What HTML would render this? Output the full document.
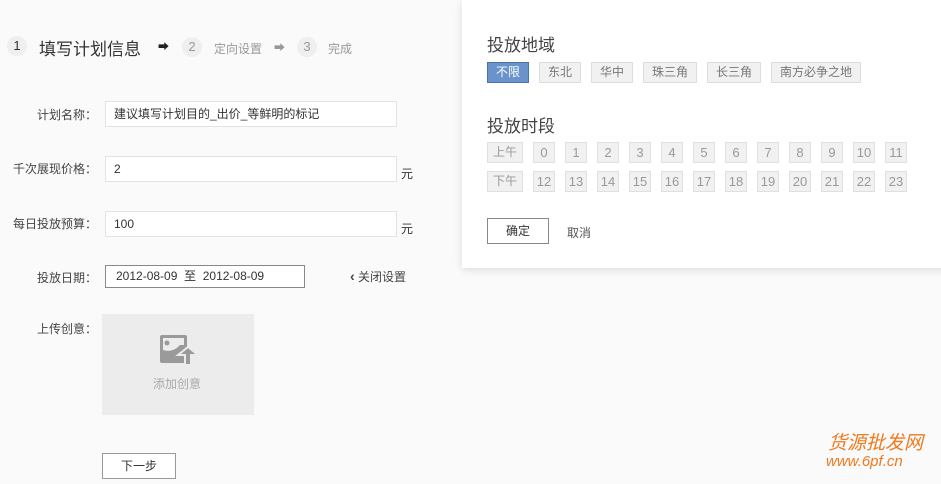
<!DOCTYPE html><html><head><meta charset="utf-8"><style>
body{margin:0;width:941px;height:484px;background:#fafafa;font-family:"Liberation Sans","Noto Sans CJK SC",sans-serif;position:relative;overflow:hidden;color:#333}
.a{position:absolute;white-space:nowrap}
.lab{font-size:12px;color:#444;text-align:right;width:97px;left:0}
.inp{background:#fff;border:1px solid #e3e3e3;box-sizing:border-box;font-size:12px;padding-left:8px;line-height:24px;color:#333}
.circ{width:20px;height:20px;border-radius:50%;background:#efefef;text-align:center;line-height:20px;font-size:13px;color:#999}
.tag{background:#f1f1f1;border:1px solid #ddd;box-sizing:border-box;height:21px;line-height:19px;text-align:center;font-size:12px;color:#777}
.h{background:#f1f1f1;border:1px solid #e0e0e0;box-sizing:border-box;width:22px;height:21px;line-height:19px;text-align:center;font-size:13px;color:#999}
</style></head><body>
<div class="a circ" style="left:7px;top:36px;color:#333">1</div>
<div class="a" style="left:39px;top:35px;font-size:17px;color:#333">填写计划信息</div>
<div class="a" style="left:158px;top:38px;font-size:11px;color:#222">➡</div>
<div class="a circ" style="left:182px;top:37px">2</div>
<div class="a" style="left:214px;top:40px;font-size:12px;color:#999">定向设置</div>
<div class="a" style="left:274px;top:39px;font-size:11px;color:#999">➡</div>
<div class="a circ" style="left:297px;top:37px">3</div>
<div class="a" style="left:328px;top:40px;font-size:12px;color:#999">完成</div>

<div class="a lab" style="top:106px">计划名称：</div>
<div class="a inp" style="left:105px;top:101px;width:292px;height:26px">建议填写计划目的_出价_等鲜明的标记</div>
<div class="a lab" style="top:160px">千次展现价格：</div>
<div class="a inp" style="left:105px;top:156px;width:292px;height:26px">2</div>
<div class="a" style="left:401px;top:165px;font-size:12px">元</div>
<div class="a lab" style="top:215px">每日投放预算：</div>
<div class="a inp" style="left:105px;top:211px;width:292px;height:26px">100</div>
<div class="a" style="left:401px;top:220px;font-size:12px">元</div>
<div class="a lab" style="top:269px">投放日期：</div>
<div class="a" style="left:105px;top:265px;width:200px;height:23px;border:1px solid #888;box-sizing:border-box;background:#fff;font-size:12px;line-height:20px;padding-left:10px;color:#333">2012-08-09&nbsp; 至 &nbsp;2012-08-09</div>
<div class="a" style="left:350px;top:268px;font-size:12px;color:#444"><b style="font-size:14px">‹</b> 关闭设置</div>
<div class="a lab" style="top:320px">上传创意：</div>
<div class="a" style="left:102px;top:314px;width:152px;height:101px;background:#ececec"></div>
<svg class="a" style="left:158px;top:333px" width="42" height="34" viewBox="0 0 42 34"><rect x="2" y="2" width="27" height="28" rx="2" fill="#9a9a9a"/><rect x="5" y="5" width="21" height="16" fill="#ececec"/><circle cx="9" cy="10" r="2.5" fill="#9a9a9a"/><path d="M5 21 L5 17 Q15 20 22 12 L26 12 L26 21Z" fill="#9a9a9a"/><path d="M20 22 L30 14 L40 22 L33 22 L33 32 L27 32 L27 22Z" fill="#9a9a9a" stroke="#ececec" stroke-width="2"/></svg>
<div class="a" style="left:153px;top:375px;font-size:12px;color:#aaa">添加创意</div>
<div class="a" style="left:102px;top:453px;width:74px;height:26px;border:1px solid #999;box-sizing:border-box;background:#fff;text-align:center;line-height:24px;font-size:12px">下一步</div>
<div class="a" style="left:828px;top:428px;font-size:19px;color:#f07a1e;font-style:italic">货源批发网</div>
<div class="a" style="left:826px;top:453px;font-size:15px;color:#f07a1e;font-style:italic">www.6pf.cn</div>

<div class="a" style="left:462px;top:0;width:490px;height:268px;background:#fff;box-shadow:0 2px 8px rgba(0,0,0,.12)"></div>
<div class="a" style="left:487px;top:31px;font-size:17px;color:#444">投放地域</div>
<div class="a tag" style="left:487px;top:62px;width:42px;background:#6a93cc;border-color:#4a73ac;color:#fff">不限</div>
<div class="a tag" style="left:539px;top:62px;width:42px">东北</div>
<div class="a tag" style="left:591px;top:62px;width:42px">华中</div>
<div class="a tag" style="left:643px;top:62px;width:54px">珠三角</div>
<div class="a tag" style="left:707px;top:62px;width:54px">长三角</div>
<div class="a tag" style="left:771px;top:62px;width:90px">南方必争之地</div>
<div class="a" style="left:487px;top:112px;font-size:17px;color:#444">投放时段</div>
<div class="a h" style="left:487px;top:142px;width:36px;font-size:12px">上午</div>
<div class="a h" style="left:487px;top:171px;width:36px;font-size:12px">下午</div>
<div class="a h" style="left:533px;top:142px">0</div><div class="a h" style="left:565px;top:142px">1</div><div class="a h" style="left:597px;top:142px">2</div><div class="a h" style="left:629px;top:142px">3</div><div class="a h" style="left:661px;top:142px">4</div><div class="a h" style="left:693px;top:142px">5</div><div class="a h" style="left:725px;top:142px">6</div><div class="a h" style="left:757px;top:142px">7</div><div class="a h" style="left:789px;top:142px">8</div><div class="a h" style="left:821px;top:142px">9</div><div class="a h" style="left:853px;top:142px">10</div><div class="a h" style="left:885px;top:142px">11</div>
<div class="a h" style="left:533px;top:171px">12</div><div class="a h" style="left:565px;top:171px">13</div><div class="a h" style="left:597px;top:171px">14</div><div class="a h" style="left:629px;top:171px">15</div><div class="a h" style="left:661px;top:171px">16</div><div class="a h" style="left:693px;top:171px">17</div><div class="a h" style="left:725px;top:171px">18</div><div class="a h" style="left:757px;top:171px">19</div><div class="a h" style="left:789px;top:171px">20</div><div class="a h" style="left:821px;top:171px">21</div><div class="a h" style="left:853px;top:171px">22</div><div class="a h" style="left:885px;top:171px">23</div>
<div class="a" style="left:487px;top:218px;width:62px;height:26px;border:1px solid #888;box-sizing:border-box;text-align:center;line-height:24px;font-size:12px;background:#fff">确定</div>
<div class="a" style="left:567px;top:224px;font-size:12px;color:#555">取消</div>
</body></html>
